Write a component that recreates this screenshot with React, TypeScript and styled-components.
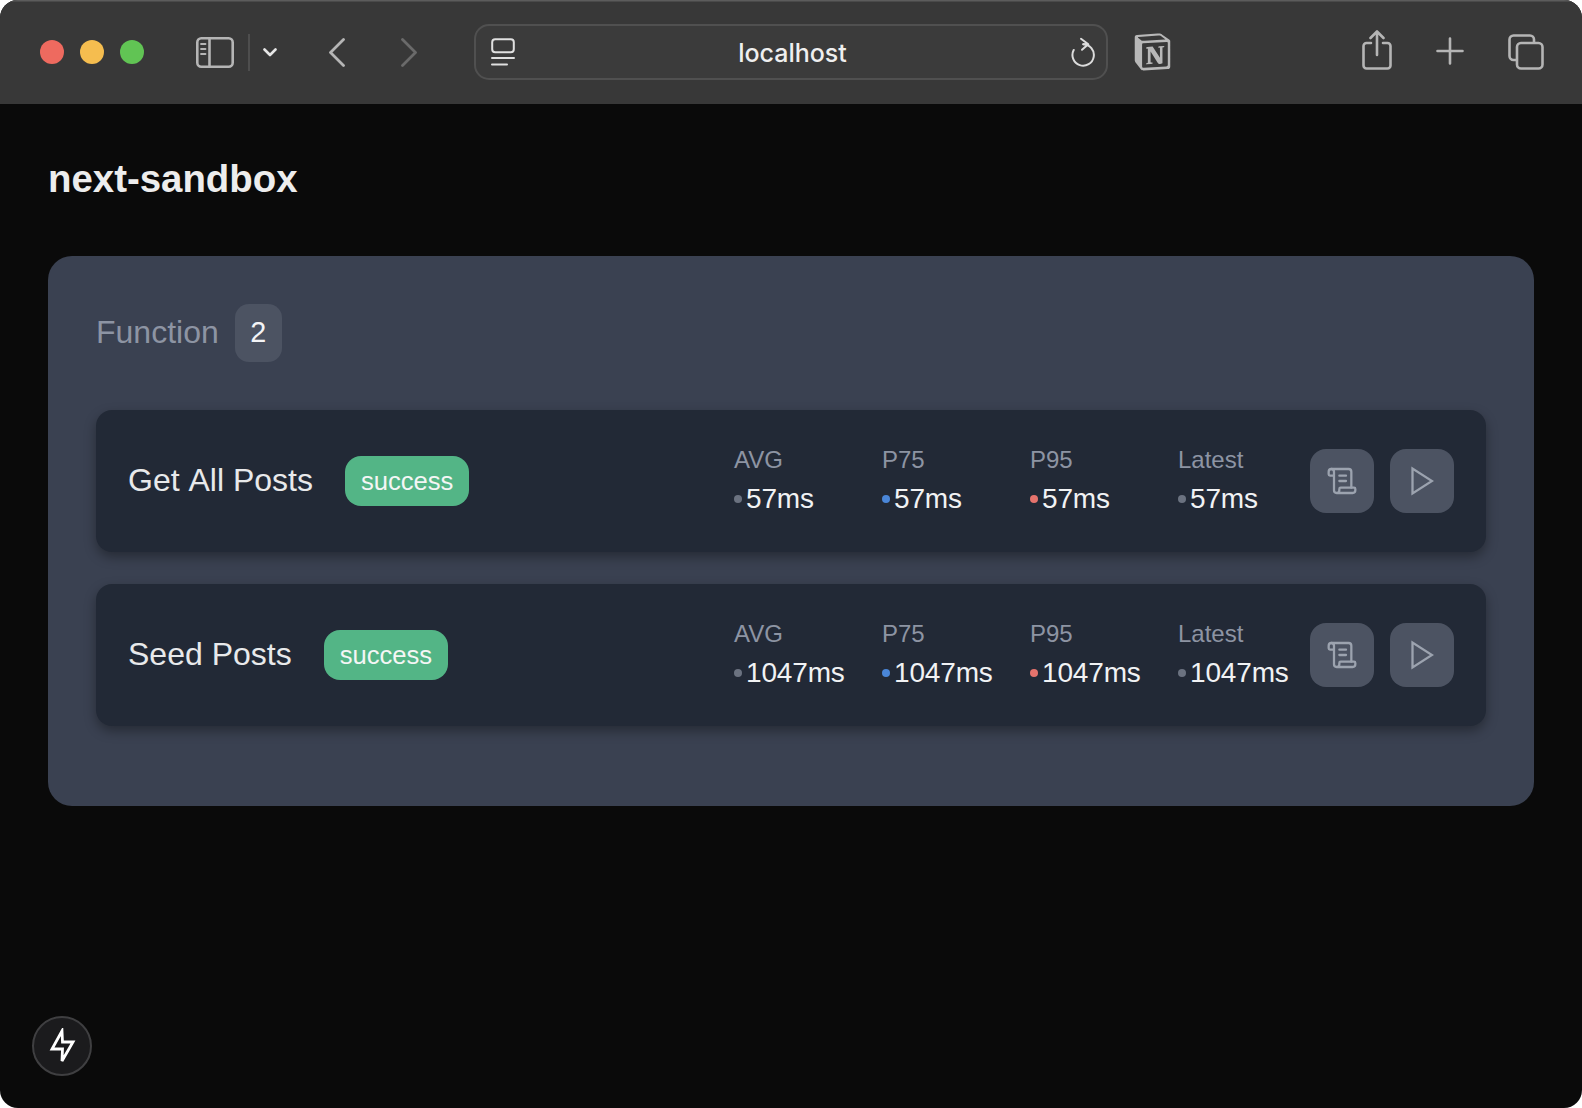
import * as React from "react";
import styled, { createGlobalStyle } from "styled-components";
import { ScrollText } from "lucide-react";
import { SiNotion } from "react-icons/si";

const GlobalStyle = createGlobalStyle`
  html, body {
    margin: 0;
    padding: 0;
    background: #fff;
  }
  * {
    box-sizing: border-box;
  }
`;

const Window = styled.div`
  position: relative;
  display: flex;
  flex-direction: column;
  width: 1582px;
  height: 1108px;
  background: #0a0a0a;
  border-radius: 18px;
  overflow: hidden;
  font-family: "Liberation Sans", Arial, sans-serif;
`;

const Toolbar = styled.header`
  display: flex;
  align-items: center;
  flex: none;
  height: 104px;
  padding: 0 38px 0 40px;
  background: #383838;
  box-shadow: inset 0 1.5px 0 #5c5c5c;
`;

const Lights = styled.div`
  display: flex;
  gap: 16px;
`;

const Light = styled.span<{ $color: string }>`
  width: 24px;
  height: 24px;
  border-radius: 50%;
  background: ${(p) => p.$color};
`;

const ToolIcon = styled.svg<{ $ml?: number; $auto?: boolean; $mb?: number }>`
  display: block;
  flex: none;
  margin-left: ${(p) => (p.$auto ? "auto" : `${p.$ml ?? 0}px`)};
  margin-bottom: ${(p) => p.$mb ?? 0}px;
  fill: none;
  stroke: #b5b5b5;
  stroke-width: 2.6;
  stroke-linecap: round;
  stroke-linejoin: round;
`;

const Divider = styled.span`
  flex: none;
  width: 1.5px;
  height: 37px;
  margin-left: 14px;
  background: #4e4e4e;
`;

const UrlBar = styled.div`
  position: relative;
  display: flex;
  align-items: center;
  justify-content: space-between;
  flex: none;
  width: 634px;
  height: 56px;
  margin-left: 57px;
  padding: 0 11px 0 15px;
  border: 2px solid #505050;
  border-radius: 15px;
  background: #3b3b3b;
`;

const UrlText = styled.span`
  position: absolute;
  left: 4px;
  right: 0;
  padding-top: 1px;
  text-align: center;
  font-family: Inter, "Liberation Sans", sans-serif;
  font-size: 25px;
  font-weight: 500;
  color: #efefef;
`;

const NotionIcon = styled(SiNotion)`
  flex: none;
  width: 37px;
  height: 38px;
  margin-left: 26px;
  color: #b8b8b8;
`;

const Main = styled.main`
  padding: 48px;
`;

const Title = styled.h1`
  margin: 0 0 48px;
  height: 56px;
  padding-bottom: 2px;
  font-size: 38.4px;
  font-weight: 700;
  line-height: 54px;
  color: #ededed;
`;

const Panel = styled.section`
  padding: 48px 48px 80px;
  background: #3a4151;
  border-radius: 24px;
`;

const PanelHeader = styled.div`
  display: flex;
  align-items: center;
  gap: 16px;
  margin-bottom: 48px;
`;

const PanelTitle = styled.h2`
  margin: 0 0 2px;
  font-size: 32px;
  font-weight: 400;
  font-kerning: none;
  color: #8d94a3;
`;

const Count = styled.span`
  display: flex;
  align-items: center;
  justify-content: center;
  width: 47px;
  height: 58px;
  padding-bottom: 2px;
  border-radius: 14px;
  background: #4c5362;
  font-size: 28.8px;
  color: #f3f4f6;
`;

const List = styled.div`
  display: flex;
  flex-direction: column;
  gap: 32px;
`;

const Card = styled.article`
  display: flex;
  align-items: center;
  height: 142px;
  padding: 0 32px;
  background: #222936;
  border-radius: 16px;
  box-shadow: 0 5px 12px rgba(0, 0, 0, 0.34);
`;

const Name = styled.h3`
  margin: 0 0 2px;
  font-size: 32px;
  font-weight: 400;
  font-kerning: none;
  color: #e8e9eb;
`;

const Status = styled.span`
  display: flex;
  align-items: center;
  height: 50px;
  margin-left: 32px;
  padding: 0 16px;
  border-radius: 16px;
  background: #53b586;
  font-size: 25.6px;
  color: #f4f6f5;
`;

const Stats = styled.div`
  display: grid;
  grid-template-columns: repeat(4, 148px);
  width: 576px;
  margin-left: auto;
`;

const Stat = styled.div`
  display: flex;
  flex-direction: column;
`;

const StatLabel = styled.span`
  font-size: 24px;
  line-height: 36px;
  color: #8d94a3;
`;

const StatValue = styled.span`
  display: flex;
  align-items: center;
  gap: 4px;
  font-size: 28px;
  line-height: 42px;
  letter-spacing: -0.15px;
  color: #f1f2f4;
`;

const Dot = styled.i<{ $color: string }>`
  flex: none;
  width: 8px;
  height: 8px;
  border-radius: 50%;
  background: ${(p) => p.$color};
`;

const Actions = styled.div`
  display: flex;
  gap: 16px;
`;

const IconButton = styled.button`
  display: flex;
  align-items: center;
  justify-content: center;
  width: 64px;
  height: 64px;
  padding: 0;
  border: 0;
  border-radius: 16px;
  background: #4c5362;
  color: #9ca3af;
`;

const DevBadge = styled.div`
  position: absolute;
  left: 32px;
  bottom: 32px;
  display: flex;
  align-items: center;
  justify-content: center;
  width: 60px;
  height: 60px;
  border: 2px solid #3f3f41;
  border-radius: 50%;
  background: #1b1b1d;
`;

const functions = [
  { name: "Get All Posts", ms: "57ms" },
  { name: "Seed Posts", ms: "1047ms" },
];

const metrics = [
  { label: "AVG", color: "#6b7280" },
  { label: "P75", color: "#4a86d8" },
  { label: "P95", color: "#e5736d" },
  { label: "Latest", color: "#6b7280" },
];

function IconRow() {
  return (
    <Actions>
      <IconButton aria-label="Logs">
        <ScrollText size={32} strokeWidth={1.7} />
      </IconButton>
      <IconButton aria-label="Run">
        <svg width="24" height="30" viewBox="0 0 24 30" fill="none" stroke="currentColor" strokeWidth="2.3" strokeLinejoin="miter">
          <path d="M2.500 2.500v25L22 15z" />
        </svg>
      </IconButton>
    </Actions>
  );
}

export default function App() {
  return (
    <Window>
      <GlobalStyle />
      <Toolbar>
        <Lights>
          <Light $color="#ee6a5f" />
          <Light $color="#f5bd4f" />
          <Light $color="#61c454" />
        </Lights>
        <ToolIcon $ml={52} width="38" height="31" viewBox="0 0 38 31">
          <rect x="1.3" y="1.3" width="35.4" height="28.4" rx="4" />
          <path d="M13.5 1.5v28" />
          <path d="M5 7h4.5M5 12h4.5M5 17h4.5" strokeWidth="1.8" />
        </ToolIcon>
        <Divider />
        <ToolIcon $ml={13} width="14" height="9" viewBox="0 0 14 9">
          <path d="M1.5 1.5 7 7l5.5-5.5" stroke="#e6e6e6" strokeWidth="2.6" />
        </ToolIcon>
        <ToolIcon $ml={52} width="16" height="29" viewBox="0 0 16 29">
          <path d="M14.5 1.5 1.5 14.5l13 13" strokeWidth="2.8" />
        </ToolIcon>
        <ToolIcon $ml={56} width="16" height="29" viewBox="0 0 16 29">
          <path d="m1.5 1.5 13 13-13 13" stroke="#6a6a6a" strokeWidth="2.8" />
        </ToolIcon>
        <UrlBar>
          <ToolIcon width="24" height="28" viewBox="0 0 24 28">
            <rect x="1.2" y="1.2" width="21.6" height="13" rx="3" stroke="#e0e0e0" strokeWidth="2" />
            <path d="M1 20h22M1 26.5h15" stroke="#e0e0e0" strokeWidth="2" />
          </ToolIcon>
          <UrlText>localhost</UrlText>
          <ToolIcon width="24" height="30" viewBox="0 0 24 30">
            <path d="M12.300 7.300A10.700 10.700 0 1 1 2.700 13" stroke="#dcdcdc" strokeWidth="2" />
            <path d="M10 1.800l7.300 5.500H12.300M17.300 7.300 11 12.800" stroke="#dcdcdc" strokeWidth="2" />
          </ToolIcon>
        </UrlBar>
        <NotionIcon />
        <ToolIcon $auto $mb={4} width="30" height="40" viewBox="0 0 30 40">
          <path d="M9 13H4.500a3 3 0 0 0-3 3v19.500a3 3 0 0 0 3 3h21a3 3 0 0 0 3-3V16a3 3 0 0 0-3-3H21" />
          <path d="M15 25V2M8.500 8 15 1.500 21.500 8" />
        </ToolIcon>
        <ToolIcon $ml={44} $mb={2} width="28" height="28" viewBox="0 0 28 28">
          <path d="M14 1.500v25M1.500 14h25" />
        </ToolIcon>
        <ToolIcon $ml={44} $mb={1} width="36" height="36" viewBox="0 0 36 36">
          <path d="M8 26H5.500a4 4 0 0 1-4-4V5.500a4 4 0 0 1 4-4H22a4 4 0 0 1 4 4V8" />
          <rect x="9" y="9" width="25.500" height="25.500" rx="4" />
        </ToolIcon>
      </Toolbar>
      <Main>
        <Title>next-sandbox</Title>
        <Panel>
          <PanelHeader>
            <PanelTitle>Function</PanelTitle>
            <Count>2</Count>
          </PanelHeader>
          <List>
            {functions.map((fn) => (
              <Card key={fn.name}>
                <Name>{fn.name}</Name>
                <Status>success</Status>
                <Stats>
                  {metrics.map((m) => (
                    <Stat key={m.label}>
                      <StatLabel>{m.label}</StatLabel>
                      <StatValue>
                        <Dot $color={m.color} />
                        {fn.ms}
                      </StatValue>
                    </Stat>
                  ))}
                </Stats>
                <IconRow />
              </Card>
            ))}
          </List>
        </Panel>
      </Main>
      <DevBadge>
        <svg width="28" height="36" viewBox="0 0 28 36" fill="none" stroke="#fff" strokeWidth="2.8" strokeLinejoin="miter">
          <path d="M14 3 4 21h10.500L14 33l11-19H14.500z" />
        </svg>
      </DevBadge>
    </Window>
  );
}
